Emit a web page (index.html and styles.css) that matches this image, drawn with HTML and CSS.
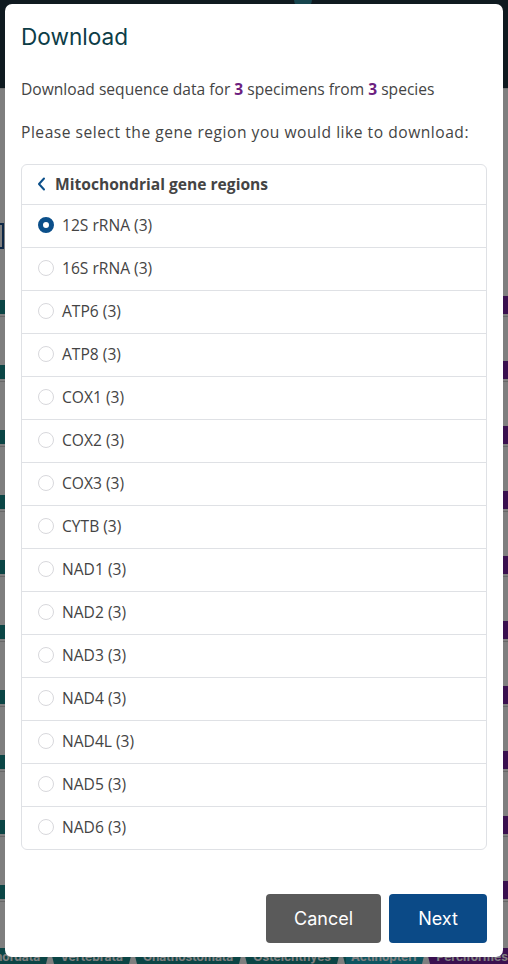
FILE: index.html
```html
<!DOCTYPE html>
<html lang="en">
<head>
<meta charset="utf-8">
<title>Download</title>
<link rel="stylesheet" href="styles.css">
</head>
<body>
<div class="page">
  <header class="topbar"><span class="dot"></span></header>
  <div class="controls"><span class="search"></span></div>
  <ul class="results">
    <li class="result"><span class="blk teal"></span><span class="blk purple"></span></li>
    <li class="result"><span class="blk teal"></span><span class="blk purple"></span></li>
    <li class="result"><span class="blk teal"></span><span class="blk purple"></span></li>
    <li class="result"><span class="blk teal"></span><span class="blk purple"></span></li>
    <li class="result"><span class="blk teal"></span><span class="blk purple"></span></li>
    <li class="result"><span class="blk teal"></span><span class="blk purple"></span></li>
    <li class="result"><span class="blk teal"></span><span class="blk purple"></span></li>
    <li class="result"><span class="blk teal"></span><span class="blk purple"></span></li>
    <li class="result"><span class="blk teal"></span><span class="blk purple"></span></li>
    <li class="result"><span class="blk teal"></span><span class="blk purple"></span></li>
    <li class="result last">
      <div class="tags">
        <span class="tag t">Chordata</span><span class="sep st"></span>
        <span class="tag t">Vertebrata</span><span class="sep st"></span>
        <span class="tag t">Gnathostomata</span><span class="sep st"></span>
        <span class="tag t">Osteichthyes</span><span class="sep st"></span>
        <span class="tag a">Actinopteri</span><span class="sep sa"></span>
        <span class="tag p">Perciformes</span>
      </div>
    </li>
  </ul>
</div>

<div class="backdrop"></div>

<div class="modal" role="dialog">
  <h2 class="modal-title">Download</h2>
  <p class="lead">Download sequence data for <b class="num">3</b> specimens from <b class="num">3</b> species</p>
  <p class="lead wide">Please select the gene region you would like to download:</p>

  <div class="card">
    <div class="card-head">
      <svg class="chev" width="9" height="14" viewBox="0 0 9 14"><path d="M7 1.5 L2 7 L7 12.5" fill="none" stroke="#0b4f8a" stroke-width="2" stroke-linecap="round" stroke-linejoin="round"/></svg>
      <span>Mitochondrial gene regions</span>
    </div>
    <label class="row"><span class="radio on"></span>12S rRNA (3)</label>
    <label class="row"><span class="radio"></span>16S rRNA (3)</label>
    <label class="row"><span class="radio"></span>ATP6 (3)</label>
    <label class="row"><span class="radio"></span>ATP8 (3)</label>
    <label class="row"><span class="radio"></span>COX1 (3)</label>
    <label class="row"><span class="radio"></span>COX2 (3)</label>
    <label class="row"><span class="radio"></span>COX3 (3)</label>
    <label class="row"><span class="radio"></span>CYTB (3)</label>
    <label class="row"><span class="radio"></span>NAD1 (3)</label>
    <label class="row"><span class="radio"></span>NAD2 (3)</label>
    <label class="row"><span class="radio"></span>NAD3 (3)</label>
    <label class="row"><span class="radio"></span>NAD4 (3)</label>
    <label class="row"><span class="radio"></span>NAD4L (3)</label>
    <label class="row"><span class="radio"></span>NAD5 (3)</label>
    <label class="row"><span class="radio"></span>NAD6 (3)</label>
  </div>

  <div class="actions">
    <button class="btn cancel">Cancel</button>
    <button class="btn next">Next</button>
  </div>
</div>
</body>
</html>
```

FILE: styles.css
```css
* { box-sizing: border-box; }
html, body { margin: 0; padding: 0; }
body {
  width: 508px;
  height: 964px;
  overflow: hidden;
  background: #ffffff;
  font-family: "Open Sans", "Noto Sans", sans-serif;
}

/* underlying page (dimmed by the backdrop) */
.page { width: 508px; overflow: hidden; }
.topbar {
  height: 88px;
  background: #1f3541;
  display: flex;
  justify-content: center;
}
.dot {
  width: 18px; height: 18px; border-radius: 50%;
  background: #2f8a9c;
  margin: -9px 0 0 98px;
}
.controls {
  height: 164px;
  padding-top: 134px;
  border-top: 1px solid #e0e0e0;
}
.search {
  display: block;
  width: 44px;
  height: 26px;
  border: 2px solid #1a4f8a;
  margin-left: -40px;
}
.results { list-style: none; margin: 0; padding: 0; }
.result {
  height: 65px;
  border-bottom: 1px solid #d0d0d0;
  padding-top: 48px;
  display: flex;
  justify-content: space-between;
  align-items: flex-start;
}
.blk { display: block; height: 14px; }
.blk.teal { width: 20px; margin-left: -10px; background: #168a8a; }
.blk.purple { width: 20px; margin-right: -10px; height: 18px; margin-top: -4px; background: #74209f; border-radius: 3px; }
.result.last { border-bottom: 0; padding-top: 46px; display: block; }
.tags {
  display: flex;
  align-items: flex-start;
  white-space: nowrap;
  margin-left: -19px;
}
.tag {
  font-family: "Inter", sans-serif;
  font-weight: 700;
  font-size: 12px;
  color: #fff;
  padding: 0 5px;
  height: 20px;
  line-height: 18px;
  flex: none;
}
.tag.t { background: #168a8a; }
.tag.a { background: #1cabc2; }
.tag.p { background: #74209f; }
.sep {
  flex: none;
  width: 10px;
  height: 20px;
  display: flex;
  justify-content: center;
  align-items: flex-start;
}
.sep::after {
  content: "";
  width: 0;
  height: 0;
  border-left: 4px solid transparent;
  border-right: 4px solid transparent;
  border-bottom: 16px solid #ffffff;
}
.sep.st { background: linear-gradient(90deg, #168a8a 50%, #168a8a 50%); }
.sep.sa { background: linear-gradient(90deg, #1cabc2 50%, #74209f 50%); }

.backdrop {
  position: fixed;
  inset: 0;
  background: rgba(0, 0, 0, 0.5);
}

/* modal */
.modal {
  position: fixed;
  left: 5px;
  top: 4px;
  width: 498px;
  height: 953px;
  background: #fff;
  border-radius: 7px;
  padding: 16px 16px 14px 16px;
  display: flex;
  flex-direction: column;
}
.modal-title {
  margin: 0;
  font-family: "Inter", sans-serif;
  font-weight: 400;
  font-size: 22.6px;
  line-height: 34px;
  color: #0d3d47;
}
.lead {
  margin: 21px 0 0 0;
  font-size: 15.6px;
  line-height: 22px;
  color: #444;
}
.lead.wide { letter-spacing: 0.52px; }
.modal-title + .lead { margin-top: 24px; }
.num { color: #6d1f80; font-weight: 700; }

.card {
  margin-top: 21px;
  border: 1px solid #dfe1e5;
  border-radius: 6px;
  display: flex;
  flex-direction: column;
}
.card-head {
  height: 39px;
  display: flex;
  align-items: center;
  gap: 9px;
  padding: 0 0 1px 15px;
  font-size: 15.6px;
  font-weight: 700;
  color: #444;
}
.row {
  height: 43px;
  border-top: 1px solid #dfe1e5;
  display: flex;
  align-items: center;
  gap: 8px;
  padding: 0 0 2px 16px;
  font-size: 15.6px;
  color: #444;
}
.radio {
  width: 16px;
  height: 16px;
  border-radius: 50%;
  border: 1px solid #d8d8dc;
  background: #fff;
  flex: none;
}
.radio.on { border: 5px solid #0b4f8a; }

.actions {
  margin-top: auto;
  display: flex;
  justify-content: flex-end;
  gap: 8px;
}
.btn {
  height: 49px;
  border: 0;
  border-radius: 4px;
  color: #fff;
  font-family: "Inter", sans-serif;
  font-size: 18px;
  font-weight: 400;
}
.cancel { width: 115px; background: #5a5a5a; }
.next { width: 98px; background: #0b4a87; }
```
